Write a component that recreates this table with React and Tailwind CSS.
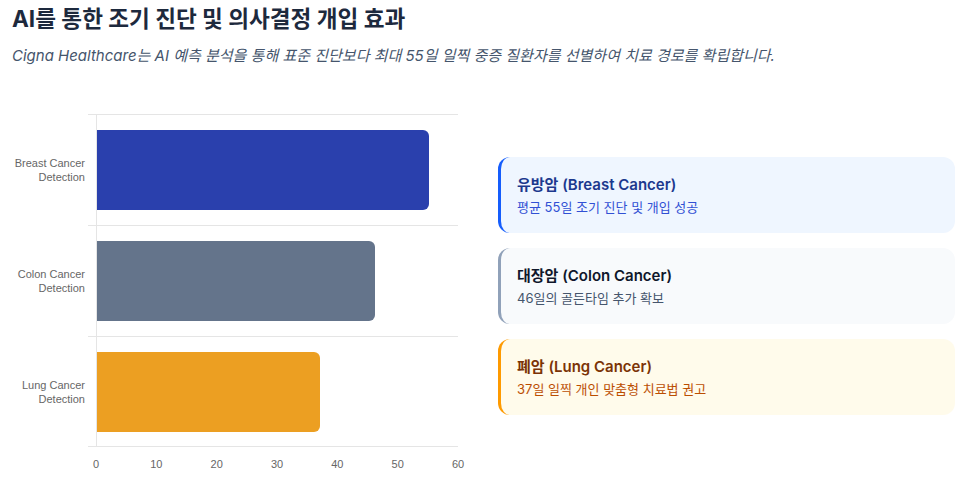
import React from 'react';

const bars = [
  { label: ['Breast Cancer', 'Detection'], value: 55, color: 'bg-[#2a40ad]' },
  { label: ['Colon Cancer', 'Detection'], value: 46, color: 'bg-[#64748b]' },
  { label: ['Lung Cancer', 'Detection'], value: 37, color: 'bg-[#ec9f22]' },
];

const ticks = [0, 10, 20, 30, 40, 50, 60];

const cards = [
  {
    title: '유방암 (Breast Cancer)',
    desc: '평균 55일 조기 진단 및 개입 성공',
    box: 'bg-blue-50 border-blue-600',
    titleColor: 'text-blue-900',
    descColor: 'text-[#3150d4]',
  },
  {
    title: '대장암 (Colon Cancer)',
    desc: '46일의 골든타임 추가 확보',
    box: 'bg-slate-50 border-slate-400',
    titleColor: 'text-slate-900',
    descColor: 'text-slate-600',
  },
  {
    title: '폐암 (Lung Cancer)',
    desc: '37일 일찍 개인 맞춤형 치료법 권고',
    box: 'bg-amber-50 border-amber-500',
    titleColor: 'text-amber-900',
    descColor: 'text-amber-700',
  },
];

const PLOT_W = 362;

function Chart() {
  return (
    <div className="w-[470px] font-['Liberation_Sans',Arial,sans-serif] text-[#666]">
      {bars.map((b, i) => (
        <div key={i} className="flex h-[111px]">
          <div className="w-[88px] pr-[3px] flex flex-col items-end justify-center text-[11px] leading-[14px]">
            <span>{b.label[0]}</span>
            <span>{b.label[1]}</span>
          </div>
          <div className={`w-[370px] flex border-t border-[#e5e5e5] ${i === bars.length - 1 ? 'border-b' : ''}`}>
            <div className="w-2" />
            <div className="flex-1 flex items-center border-l border-[#e5e5e5]">
              <div
                className={`h-[80px] rounded-r-[6px] ${b.color}`}
                style={{ width: (b.value / 60) * PLOT_W }}
              />
            </div>
          </div>
        </div>
      ))}
      <div className="relative ml-[96px] w-[362px] h-[30px] text-[11px]">
        {ticks.map((t) => (
          <span
            key={t}
            className="absolute top-[9px] -translate-x-1/2"
            style={{ left: (t / 60) * PLOT_W }}
          >
            {t}
          </span>
        ))}
      </div>
    </div>
  );
}

export default function App() {
  return (
    <main className="w-[975px] h-[491px] bg-white px-3 pt-[4px] font-['Inter','Noto_Sans_CJK_KR',sans-serif]">
      <h1 className="text-[22.6px] leading-[30px] font-bold text-slate-800">
        AI를 통한 조기 진단 및 의사결정 개입 효과
      </h1>
      <p className="mt-[12px] text-[15px] leading-[20px] italic text-slate-600">
        Cigna Healthcare는 AI 예측 분석을 통해 표준 진단보다 최대 55일 일찍 중증 질환자를 선별하여 치료 경로를 확립합니다.
      </p>

      <div className="mt-[48px] flex -ml-3">
        <Chart />
        <div className="ml-[28px] w-[457px] pt-[43px] flex flex-col gap-[15px]">
          {cards.map((c, i) => (
            <div
              key={i}
              className={`h-[76px] rounded-xl border-l-[3px] pl-4 flex flex-col justify-center ${c.box}`}
            >
              <div className={`text-[15px] leading-[20px] font-semibold ${c.titleColor}`}>{c.title}</div>
              <div className={`mt-[4px] text-[13px] leading-[16px] ${c.descColor}`}>{c.desc}</div>
            </div>
          ))}
        </div>
      </div>
    </main>
  );
}
